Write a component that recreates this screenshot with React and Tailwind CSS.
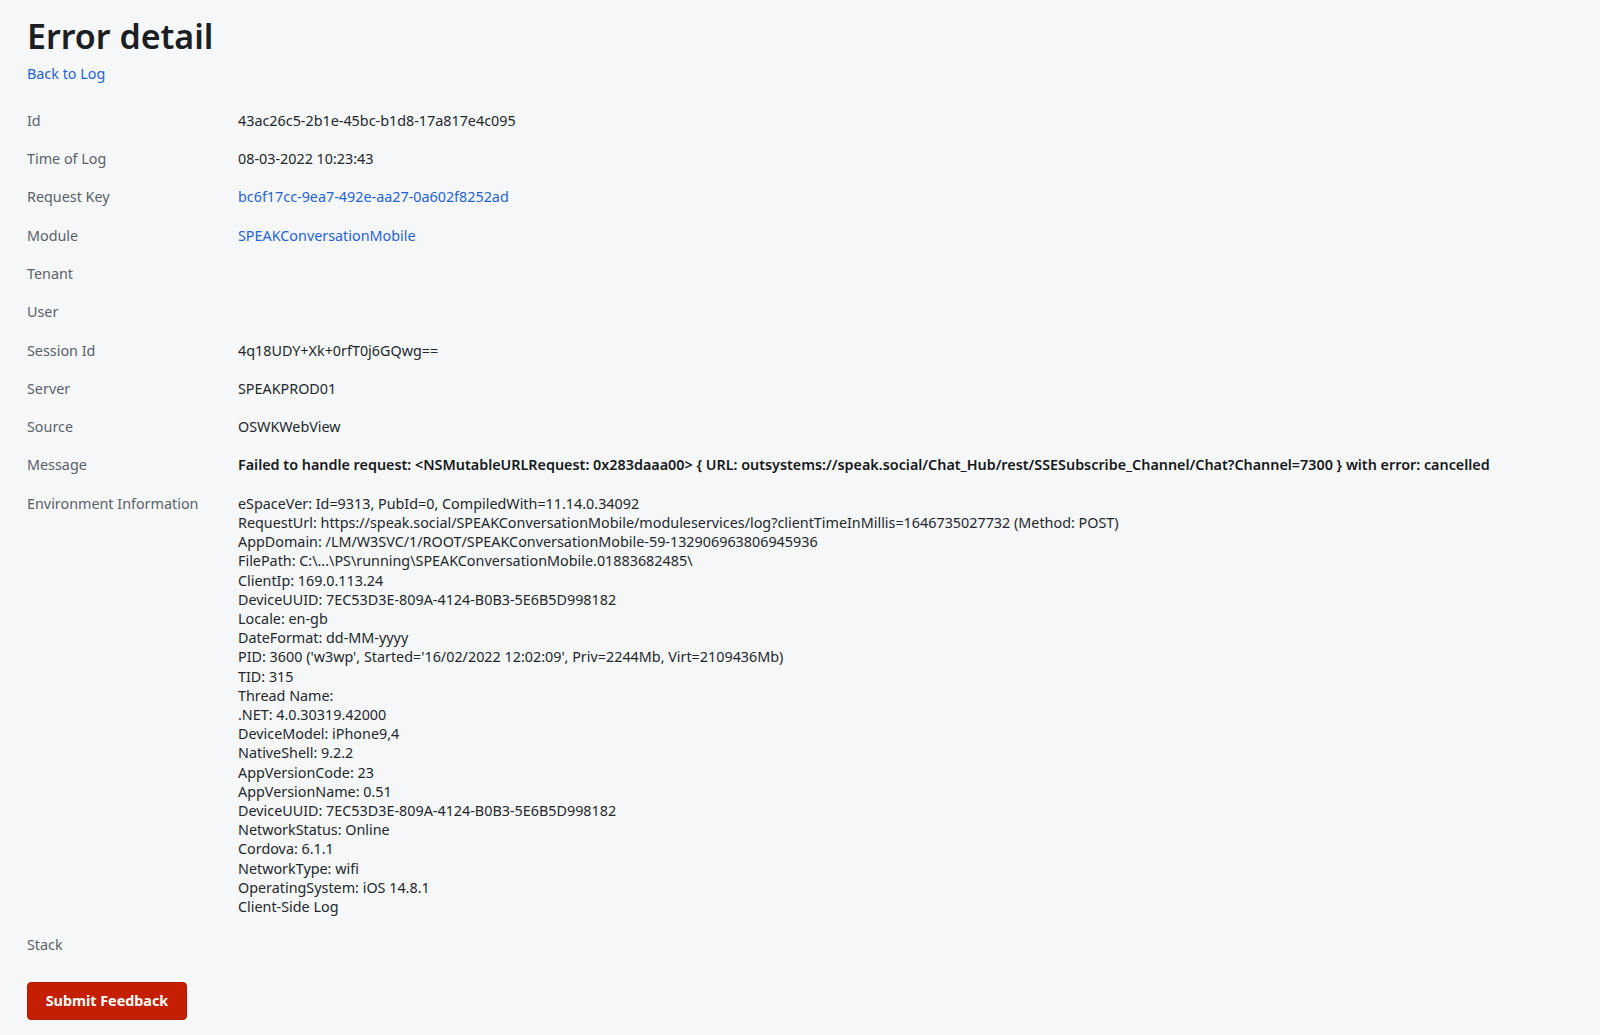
const rows = [
  { label: 'Id', value: '43ac26c5-2b1e-45bc-b1d8-17a817e4c095' },
  { label: 'Time of Log', value: '08-03-2022 10:23:43' },
  { label: 'Request Key', value: 'bc6f17cc-9ea7-492e-aa27-0a602f8252ad', link: true },
  { label: 'Module', value: 'SPEAKConversationMobile', link: true },
  { label: 'Tenant', value: '' },
  { label: 'User', value: '' },
  { label: 'Session Id', value: '4q18UDY+Xk+0rfT0j6GQwg==' },
  { label: 'Server', value: 'SPEAKPROD01' },
  { label: 'Source', value: 'OSWKWebView' },
  {
    label: 'Message',
    value:
      'Failed to handle request: <NSMutableURLRequest: 0x283daaa00> { URL: outsystems://speak.social/Chat_Hub/rest/SSESubscribe_Channel/Chat?Channel=7300 } with error: cancelled',
    bold: true,
  },
];

const envInfo = [
  'eSpaceVer: Id=9313, PubId=0, CompiledWith=11.14.0.34092',
  'RequestUrl: https://speak.social/SPEAKConversationMobile/moduleservices/log?clientTimeInMillis=1646735027732 (Method: POST)',
  'AppDomain: /LM/W3SVC/1/ROOT/SPEAKConversationMobile-59-132906963806945936',
  'FilePath: C:\\...\\PS\\running\\SPEAKConversationMobile.01883682485\\',
  'ClientIp: 169.0.113.24',
  'DeviceUUID: 7EC53D3E-809A-4124-B0B3-5E6B5D998182',
  'Locale: en-gb',
  'DateFormat: dd-MM-yyyy',
  "PID: 3600 ('w3wp', Started='16/02/2022 12:02:09', Priv=2244Mb, Virt=2109436Mb)",
  'TID: 315',
  'Thread Name:',
  '.NET: 4.0.30319.42000',
  'DeviceModel: iPhone9,4',
  'NativeShell: 9.2.2',
  'AppVersionCode: 23',
  'AppVersionName: 0.51',
  'DeviceUUID: 7EC53D3E-809A-4124-B0B3-5E6B5D998182',
  'NetworkStatus: Online',
  'Cordova: 6.1.1',
  'NetworkType: wifi',
  'OperatingSystem: iOS 14.8.1',
  'Client-Side Log',
];

function DetailRow({ label, children }) {
  return (
    <div className="flex py-[9.55px]">
      <div className="w-[211px] shrink-0 text-[#5b6169]">{label}</div>
      <div className="min-w-0 flex-1 text-[#23272c]">{children}</div>
    </div>
  );
}

export default function App() {
  return (
    <div
      className="min-h-[1035px] bg-[#f6f7f9] px-[27px] pt-[16px] pb-[14px] text-[14.35px] leading-[19.2px]"
      style={{ fontFamily: '"Noto Sans", "Open Sans", sans-serif' }}
    >
      <h1 className="text-[34px] font-semibold leading-[40px] text-[#1b1e22]">Error detail</h1>
      <a href="#" className="mt-[8px] block w-fit text-[#1f63d8]">
        Back to Log
      </a>

      <div className="mt-[18px]">
        {rows.map((row) => (
          <DetailRow key={row.label} label={row.label}>
            {row.link ? (
              <a href="#" className="text-[#1f63d8]">
                {row.value}
              </a>
            ) : (
              <span className={row.bold ? 'font-semibold text-[#15181b]' : ''}>{row.value}</span>
            )}
          </DetailRow>
        ))}

        <DetailRow label="Environment Information">
          {envInfo.map((line, i) => (
            <div key={i}>{line}</div>
          ))}
        </DetailRow>

        <DetailRow label="Stack">
          <span />
        </DetailRow>
      </div>

      <button
        type="button"
        className="mt-[18px] h-[38px] w-[160px] rounded-[4px] border border-[#b01a00] bg-[#c41f00] text-[14.35px] font-bold text-white"
      >
        Submit Feedback
      </button>
    </div>
  );
}
